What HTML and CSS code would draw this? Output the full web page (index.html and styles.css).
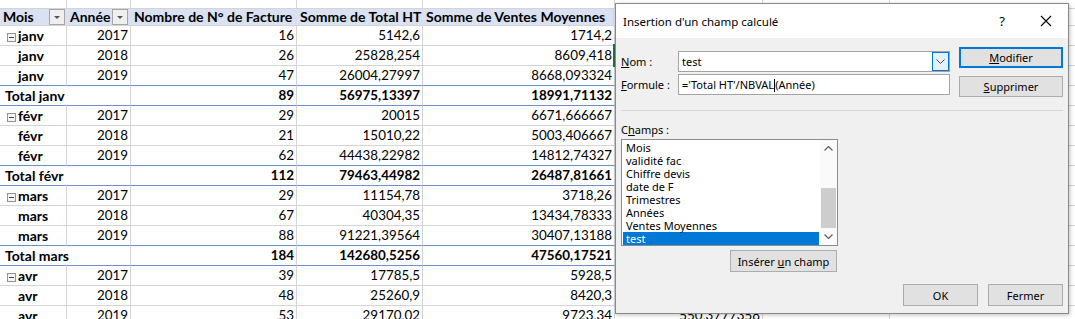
FILE: index.html
```html
<!DOCTYPE html>
<html lang="fr">
<head>
    <meta charset="UTF-8">
    <title>Insertion d'un champ calculé</title>
    <link rel="stylesheet" href="styles.css">
</head>
<body>
    <div class="sheet">
        <div class="row strip">
            <div class="c"></div><div class="c"></div><div class="c"></div><div class="c"></div>
            <div class="c"></div><div class="c"></div><div class="c"></div><div class="c"></div>
        </div>
        <div class="row head">
            <div class="c p hd">Mois <span class="filter"></span></div>
            <div class="c p hd">Année <span class="filter"></span></div>
            <div class="c p hd">Nombre de N° de Facture</div>
            <div class="c p hd">Somme de Total HT</div>
            <div class="c p hd">Somme de Ventes Moyennes</div>
            <div class="c p hd"></div>
            <div class="c"></div><div class="c"></div>
        </div>

        <div class="row">
            <div class="c p lbl"><i class="exp"></i>janv</div>
            <div class="c p n">2017</div><div class="c p n">16</div><div class="c p n">5142,6</div><div class="c p n">1714,2</div>
            <div class="c p n"></div><div class="c"></div><div class="c"></div>
        </div>
        <div class="row">
            <div class="c p lbl sub">janv</div>
            <div class="c p n">2018</div><div class="c p n">26</div><div class="c p n">25828,254</div><div class="c p n">8609,418</div>
            <div class="c p n"></div><div class="c"></div><div class="c"></div>
        </div>
        <div class="row pre">
            <div class="c p lbl sub">janv</div>
            <div class="c p n">2019</div><div class="c p n">47</div><div class="c p n">26004,27997</div><div class="c p n">8668,093324</div>
            <div class="c p n"></div><div class="c"></div><div class="c"></div>
        </div>
        <div class="row tot">
            <div class="c p lbl">Total janv</div>
            <div class="c p n"></div><div class="c p n">89</div><div class="c p n">56975,13397</div><div class="c p n">18991,71132</div>
            <div class="c p n"></div><div class="c"></div><div class="c"></div>
        </div>

        <div class="row">
            <div class="c p lbl"><i class="exp"></i>févr</div>
            <div class="c p n">2017</div><div class="c p n">29</div><div class="c p n">20015</div><div class="c p n">6671,666667</div>
            <div class="c p n"></div><div class="c"></div><div class="c"></div>
        </div>
        <div class="row">
            <div class="c p lbl sub">févr</div>
            <div class="c p n">2018</div><div class="c p n">21</div><div class="c p n">15010,22</div><div class="c p n">5003,406667</div>
            <div class="c p n"></div><div class="c"></div><div class="c"></div>
        </div>
        <div class="row pre">
            <div class="c p lbl sub">févr</div>
            <div class="c p n">2019</div><div class="c p n">62</div><div class="c p n">44438,22982</div><div class="c p n">14812,74327</div>
            <div class="c p n"></div><div class="c"></div><div class="c"></div>
        </div>
        <div class="row tot">
            <div class="c p lbl">Total févr</div>
            <div class="c p n"></div><div class="c p n">112</div><div class="c p n">79463,44982</div><div class="c p n">26487,81661</div>
            <div class="c p n"></div><div class="c"></div><div class="c"></div>
        </div>

        <div class="row">
            <div class="c p lbl"><i class="exp"></i>mars</div>
            <div class="c p n">2017</div><div class="c p n">29</div><div class="c p n">11154,78</div><div class="c p n">3718,26</div>
            <div class="c p n"></div><div class="c"></div><div class="c"></div>
        </div>
        <div class="row">
            <div class="c p lbl sub">mars</div>
            <div class="c p n">2018</div><div class="c p n">67</div><div class="c p n">40304,35</div><div class="c p n">13434,78333</div>
            <div class="c p n"></div><div class="c"></div><div class="c"></div>
        </div>
        <div class="row pre">
            <div class="c p lbl sub">mars</div>
            <div class="c p n">2019</div><div class="c p n">88</div><div class="c p n">91221,39564</div><div class="c p n">30407,13188</div>
            <div class="c p n"></div><div class="c"></div><div class="c"></div>
        </div>
        <div class="row tot">
            <div class="c p lbl">Total mars</div>
            <div class="c p n"></div><div class="c p n">184</div><div class="c p n">142680,5256</div><div class="c p n">47560,17521</div>
            <div class="c p n"></div><div class="c"></div><div class="c"></div>
        </div>

        <div class="row">
            <div class="c p lbl"><i class="exp"></i>avr</div>
            <div class="c p n">2017</div><div class="c p n">39</div><div class="c p n">17785,5</div><div class="c p n">5928,5</div>
            <div class="c p n"></div><div class="c"></div><div class="c"></div>
        </div>
        <div class="row">
            <div class="c p lbl sub">avr</div>
            <div class="c p n">2018</div><div class="c p n">48</div><div class="c p n">25260,9</div><div class="c p n">8420,3</div>
            <div class="c p n"></div><div class="c"></div><div class="c"></div>
        </div>
        <div class="row">
            <div class="c p lbl sub">avr</div>
            <div class="c p n">2019</div><div class="c p n">53</div><div class="c p n">29170,02</div><div class="c p n">9723,34</div>
            <div class="c p n">550,3777358</div><div class="c"></div><div class="c"></div>
        </div>
    </div>

    <div class="active-cell"></div>

    <div class="dialog">
        <div class="dlg-title">
            <span class="dlg-name">Insertion d'un champ calculé</span>
            <span class="help">?</span>
            <span class="close">
                <svg width="12" height="12" viewBox="0 0 12 12"><path d="M1 1L11 11M11 1L1 11" stroke="#000" stroke-width="1.1" fill="none"/></svg>
            </span>
        </div>
        <div class="dlg-body">
            <div class="top">
                <div class="fields">
                    <label><u>N</u>om :</label>
                    <div class="box combo">
                        <span class="val">test</span>
                        <span class="combo-btn">
                            <svg width="9" height="5" viewBox="0 0 9 5"><path d="M0.5 0.5L4.5 4.5L8.5 0.5" stroke="#444" fill="none"/></svg>
                        </span>
                    </div>
                    <label><u>F</u>ormule :</label>
                    <div class="box"><span class="val">='Total HT'/NBVAL<span class="caret"></span>(Année)</span></div>
                </div>
                <div class="side">
                    <button class="btn default"><u>M</u>odifier</button>
                    <button class="btn"><u>S</u>upprimer</button>
                </div>
            </div>
            <div class="sep"></div>
            <div class="champs-label">C<u>h</u>amps :</div>
            <div class="list-area">
                <div class="listbox">
                    <div class="items">
                        <div class="item">Mois</div>
                        <div class="item">validité fac</div>
                        <div class="item">Chiffre devis</div>
                        <div class="item">date de F</div>
                        <div class="item">Trimestres</div>
                        <div class="item">Années</div>
                        <div class="item">Ventes Moyennes</div>
                        <div class="item selected">test</div>
                    </div>
                    <div class="scrollbar">
                        <span class="arrow">
                            <svg width="9" height="5" viewBox="0 0 9 5"><path d="M0.5 4.5L4.5 0.5L8.5 4.5" stroke="#606060" stroke-width="1.2" fill="none"/></svg>
                        </span>
                        <span class="track"><span class="thumb"></span></span>
                        <span class="arrow">
                            <svg width="9" height="5" viewBox="0 0 9 5"><path d="M0.5 0.5L4.5 4.5L8.5 0.5" stroke="#606060" stroke-width="1.2" fill="none"/></svg>
                        </span>
                    </div>
                </div>
                <button class="btn insert">Insérer <u>u</u>n champ</button>
            </div>
            <div class="footer">
                <button class="btn small">OK</button>
                <button class="btn small">Fermer</button>
            </div>
        </div>
    </div>
</body>
</html>
```

FILE: styles.css
```css
body {
    margin: 0;
    width: 1075px;
    height: 319px;
    overflow: hidden;
    position: relative;
    background: #fff;
    color: #000;
    font-family: Lato, "Liberation Sans", sans-serif;
    font-size: 14px;
}
.row {
    display: grid;
    grid-template-columns: 67px 64px 166px 126px 192px 148px 127px 200px;
    height: 20px;
}
.c {
    box-sizing: border-box;
    border-right: 1px solid #d4d4d4;
    border-bottom: 1px solid #d4d4d4;
    padding: 0 2px 0 3px;
    line-height: 19px;
    white-space: nowrap;
}
.strip {
    height: 9px;
}
.head {
    height: 17px;
}
.head .hd {
    background: #d9e1f2;
    border-right-color: #d9e1f2;
    font-weight: bold;
    line-height: 16px;
    display: flex;
    justify-content: space-between;
    align-items: center;
    padding-right: 1px;
}
.head .hd:nth-child(2) {
    padding-right: 2px;
}
.filter {
    width: 16px;
    height: 16px;
    box-sizing: border-box;
    border: 1px solid #a6a6a6;
    background: #efefef;
    position: relative;
}
.filter::after {
    content: "";
    position: absolute;
    left: 4px;
    top: 6px;
    border-left: 3px solid transparent;
    border-right: 3px solid transparent;
    border-top: 3px solid #555;
}
.n {
    text-align: right;
    font-size: 13.4px;
}
.lbl {
    font-weight: bold;
    padding-left: 5px;
}
.lbl.sub {
    padding-left: 18px;
}
.exp {
    display: inline-block;
    width: 9px;
    height: 9px;
    box-sizing: border-box;
    border: 1px solid #939393;
    background: #f4f4f4;
    margin: 0 2px 0 2px;
    vertical-align: -1px;
    position: relative;
}
.exp::after {
    content: "";
    position: absolute;
    left: 1px;
    right: 1px;
    top: 3px;
    height: 1px;
    background: #444;
}
.pre .p, .tot .p {
    border-bottom-color: #6f8fcb;
}
.tot .lbl {
    border-right-color: transparent;
    overflow: visible;
}
.tot .n {
    font-weight: bold;
}
.active-cell {
    position: absolute;
    left: 613px;
    top: 44px;
    width: 150px;
    height: 23px;
    box-sizing: border-box;
    border: 2px solid #217346;
}

/* boite de dialogue */
.dialog {
    position: absolute;
    left: 615px;
    top: 3px;
    width: 454px;
    height: 311px;
    box-sizing: border-box;
    border: 1px solid #8a8a8a;
    background: #f0f0f0;
    box-shadow: 1px 1px 4px rgba(0,0,0,0.25);
    font-family: "Noto Sans", sans-serif;
    font-size: 11px;
    display: flex;
    flex-direction: column;
}
.dlg-title {
    height: 34px;
    background: #fff;
    display: flex;
    align-items: center;
    padding-left: 7px;
    font-size: 11.5px;
}
.dlg-name {
    flex: 1;
}
.help {
    width: 30px;
    text-align: center;
    font-size: 13px;
    margin-right: 14px;
}
.close {
    width: 30px;
    display: flex;
    justify-content: center;
    margin-right: 7px;
}
.dlg-body {
    flex: 1;
    display: flex;
    flex-direction: column;
    padding: 9px 5px 7px 5px;
}
.top {
    display: flex;
    justify-content: space-between;
    align-items: flex-start;
}
.fields {
    display: grid;
    grid-template-columns: 57px 272px;
    grid-auto-rows: 21px;
    row-gap: 2px;
    margin-top: 4px;
    align-items: center;
}
.box {
    box-sizing: border-box;
    height: 21px;
    border: 1px solid #a3a3a3;
    background: #fff;
    display: flex;
    align-items: center;
    padding-left: 3px;
}
.combo {
    padding-right: 0;
}
.combo .val {
    flex: 1;
}
.combo-btn {
    box-sizing: border-box;
    width: 17px;
    height: 19px;
    border: 1px solid #0078d7;
    background: #e5f1fb;
    display: flex;
    align-items: center;
    justify-content: center;
}
.caret {
    display: inline-block;
    width: 1px;
    height: 13px;
    background: #000;
    vertical-align: -3px;
}
.side {
    display: flex;
    flex-direction: column;
    gap: 8px;
}
.btn {
    box-sizing: border-box;
    height: 21px;
    width: 104px;
    border: 1px solid #adadad;
    background: #e1e1e1;
    font-family: "Noto Sans", sans-serif;
    font-size: 11px;
    color: #000;
    padding: 0;
}
.btn.default {
    border: 2px solid #0078d7;
}
.sep {
    height: 1px;
    background: #d7d7d7;
    margin-top: 13px;
}
.champs-label {
    margin-top: 11px;
    line-height: 15px;
}
.list-area {
    width: 217px;
    display: flex;
    flex-direction: column;
    align-items: flex-end;
    margin-top: 2px;
}
.listbox {
    box-sizing: border-box;
    width: 217px;
    height: 107px;
    border: 1px solid #8c8c8c;
    background: #fff;
    display: flex;
}
.items {
    flex: 1;
    padding: 1px;
}
.item {
    height: 13px;
    line-height: 13px;
    padding-left: 3px;
}
.item.selected {
    background: #0078d7;
    color: #fff;
}
.scrollbar {
    width: 17px;
    display: flex;
    flex-direction: column;
    background: #fafafa;
}
.arrow {
    height: 17px;
    display: flex;
    align-items: center;
    justify-content: center;
}
.track {
    flex: 1;
    display: flex;
    flex-direction: column;
    justify-content: flex-end;
    padding: 0 1px;
}
.thumb {
    height: 40px;
    background: #cdcdcd;
}
.btn.insert {
    width: 107px;
    height: 22px;
    margin-top: 4px;
    margin-right: 1px;
}
.footer {
    margin-top: auto;
    display: flex;
    justify-content: flex-end;
    gap: 10px;
}
.btn.small {
    width: 75px;
    height: 22px;
}
```
